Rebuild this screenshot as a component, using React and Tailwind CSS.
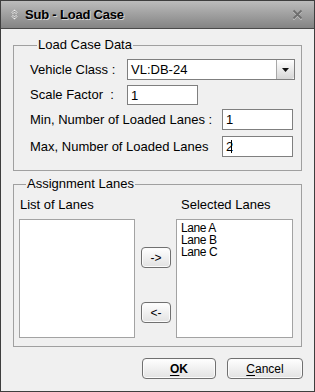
const font = "font-['Liberation_Sans','Arial',sans-serif]";

function Field({ className = '', children }) {
  return (
    <div className={`h-full bg-white border border-[#7f7f7f] pl-[3px] flex items-center text-[13px] leading-none ${className}`}>
      {children}
    </div>
  );
}

function PushButton({ className = '', children }) {
  return (
    <button className={`rounded-[4px] border border-[#707070] bg-linear-to-b from-[#ffffff] to-[#e2e2e2] shadow-[inset_0_0_0_1px_#fbfbfb] flex items-center justify-center text-black ${className}`}>
      {children}
    </button>
  );
}

function TitleIcon() {
  return (
    <svg width="9" height="11" viewBox="0 0 9 11" className="shrink-0">
      <path d="M2 4.5 L4.5 2 L7 4.5" fill="none" stroke="#eeeeee" strokeWidth="2" />
      <path d="M2 6.5 L4.5 9 L7 6.5" fill="none" stroke="#eeeeee" strokeWidth="2" />
      <path d="M2 4.5 L4.5 2 L7 4.5" fill="none" stroke="#6a6a6a" strokeWidth="0.9" />
      <path d="M2 6.5 L4.5 9 L7 6.5" fill="none" stroke="#6a6a6a" strokeWidth="0.9" />
    </svg>
  );
}

function CloseIcon() {
  return (
    <svg width="11" height="11" viewBox="0 0 11 11">
      <path d="M1.5 2.5 L9.5 10.5 M9.5 2.5 L1.5 10.5" stroke="#d0d0d0" strokeWidth="1.6" />
      <path d="M1.5 1.5 L9.5 9.5 M9.5 1.5 L1.5 9.5" stroke="#6e6e6e" strokeWidth="1.8" />
    </svg>
  );
}

export default function App() {
  return (
    <div className={`w-[315px] h-[392px] border border-[#3e3e3e] flex flex-col bg-[#f0f0f0] text-black ${font}`}>
      {/* title bar */}
      <div className="h-[28px] shrink-0 border-b border-[#4a4a4a] bg-linear-to-b from-[#bcbcbc] to-[#848484] flex items-center pl-[9px] pr-[11px]">
        <TitleIcon />
        <span className="ml-[6px] text-[13px] font-bold tracking-[-0.2px] [text-shadow:1px_1px_0_#d8d8d8]">Sub - Load Case</span>
        <span className="ml-auto flex items-center"><CloseIcon /></span>
      </div>

      <div className="flex-1 flex flex-col px-[12px]">
        {/* group 1 */}
        <fieldset className="mt-[9px] border border-[#a0a0a0] pl-[16px] pr-[6px] pb-[13px]">
          <legend className="ml-[7px] px-[1px] text-[13px] leading-[14px]">Load Case Data</legend>
          <div className="mt-[7px] h-[21px] flex items-center">
            <span className="w-[97px] text-[13px] whitespace-pre">Vehicle Class :</span>
            <div className="flex-1 h-full flex bg-white border border-[#7f7f7f]">
              <span className="flex-1 flex items-center pl-[3px] text-[13px]">VL:DB-24</span>
              <span className="w-[18px] h-full rounded-r-[3px] border-l border-[#a8a8a8] bg-linear-to-b from-[#ffffff] to-[#d6d6d6] flex items-center justify-center">
                <svg width="7" height="4" viewBox="0 0 7 4"><path d="M0 0 H7 L3.5 4 Z" fill="#111" /></svg>
              </span>
            </div>
          </div>
          <div className="mt-[5px] h-[20px] flex items-center">
            <span className="w-[97px] text-[13px] whitespace-pre">Scale Factor  :</span>
            <div className="w-[71px] h-full"><Field>1</Field></div>
          </div>
          <div className="mt-[4px] h-[21px] flex items-center">
            <span className="w-[192px] text-[13px] whitespace-pre">Min, Number of Loaded Lanes :</span>
            <div className="w-[71px] h-full"><Field>1</Field></div>
          </div>
          <div className="mt-[6px] h-[21px] flex items-center">
            <span className="w-[192px] text-[13px] whitespace-pre">Max, Number of Loaded Lanes</span>
            <div className="w-[71px] h-full">
              <Field>2<span className="w-px h-[13px] bg-black -ml-[2px]" /></Field>
            </div>
          </div>
        </fieldset>

        {/* group 2 */}
        <fieldset className="mt-[6px] border border-[#a0a0a0] pl-[5px] pr-[7px] pb-[8px]">
          <legend className="ml-[7px] px-[1px] text-[13px] leading-[14px]">Assignment Lanes</legend>
          <div className="mt-[6px] flex">
            <div className="w-[116px] flex flex-col">
              <span className="h-[16px] pl-[1px] text-[13px] leading-[16px]">List of Lanes</span>
              <div className="mt-[6px] h-[119px] bg-white border border-[#a3a3a3]" />
            </div>
            <div className="ml-[6px] w-[30px] flex flex-col">
              <PushButton className="mt-[50px] h-[21px] text-[12px]">-&gt;</PushButton>
              <PushButton className="mt-[34px] h-[21px] text-[12px]">&lt;-</PushButton>
            </div>
            <div className="ml-[5px] w-[117px] flex flex-col">
              <span className="h-[16px] pl-[5px] text-[13px] leading-[16px]">Selected Lanes</span>
              <div className="mt-[6px] h-[119px] bg-white border border-[#a3a3a3] pl-[4px] pt-[2px] font-['Liberation_Sans_Narrow','Liberation_Sans',sans-serif] text-[12px] leading-[12px] tracking-[-0.4px]">
                <div>Lane A</div>
                <div>Lane B</div>
                <div>Lane C</div>
              </div>
            </div>
          </div>
        </fieldset>

        {/* dialog buttons */}
        <div className="mt-[11px] flex justify-end mr-[-1px]">
          <PushButton className="w-[74px] h-[21px] text-[12px] font-bold"><span className="underline underline-offset-2">O</span>K</PushButton>
          <PushButton className="ml-[11px] w-[76px] h-[21px] text-[12px]"><span className="underline underline-offset-2">C</span>ancel</PushButton>
        </div>
      </div>
    </div>
  );
}
